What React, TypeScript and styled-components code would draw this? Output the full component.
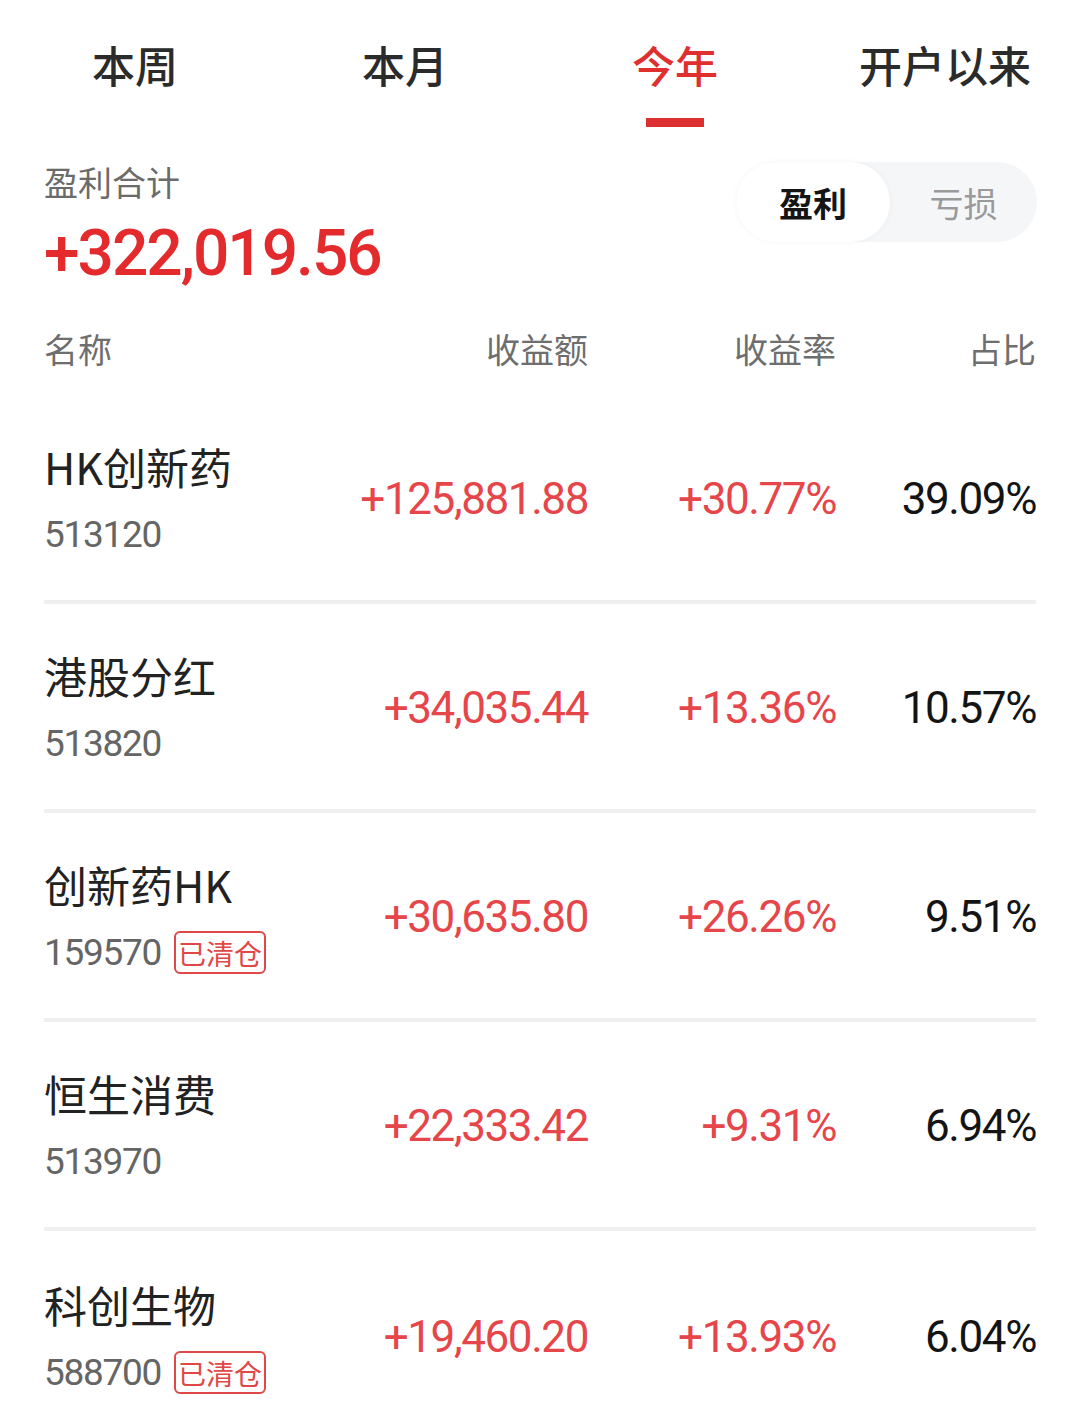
import React from "react";
import styled, { createGlobalStyle } from "styled-components";

const GlobalStyle = createGlobalStyle`
  html, body { margin: 0; padding: 0; background: #ffffff; }
  body { font-family: "Noto Sans CJK SC", "Noto Sans", sans-serif; }
  * { box-sizing: border-box; }
`;

const CJK = `"Noto Sans CJK SC", "Noto Sans", sans-serif`;
const NUM = `Roboto, "Noto Sans CJK SC", sans-serif`;

const Page = styled.div`
  width: 1080px;
  min-height: 1426px;
  background: #fff;
  overflow: hidden;
`;

const Tabs = styled.div`
  display: grid;
  grid-template-columns: repeat(4, 1fr);
  height: 127px;
`;

const Tab = styled.div`
  display: flex;
  flex-direction: column;
  align-items: center;
  padding-top: 41px;
`;

const TabLabel = styled.span<{ $active?: boolean }>`
  font-family: ${CJK};
  font-size: 43px;
  line-height: 46px;
  font-weight: 500;
  color: ${(p) => (p.$active ? "#df2f2f" : "#2b2b2b")};
`;

const Indicator = styled.div<{ $active?: boolean }>`
  margin-top: 31px;
  width: 58px;
  height: 9px;
  background: ${(p) => (p.$active ? "#dc2f2f" : "transparent")};
`;

const Content = styled.div`
  padding: 0 44px;
`;

const Summary = styled.div`
  display: flex;
  justify-content: space-between;
  align-items: flex-start;
  padding-top: 35px;
`;

const SummaryLeft = styled.div`
  display: flex;
  flex-direction: column;
`;

const SummaryLabel = styled.div`
  font-family: ${CJK};
  font-size: 34px;
  line-height: 40px;
  color: #6b6b6b;
`;

const Total = styled.div`
  margin-top: 17px;
  font-family: ${NUM};
  font-size: 64px;
  line-height: 70px;
  font-weight: 500;
  letter-spacing: -2px;
  color: #e32a2d;
`;

const Toggle = styled.div`
  display: flex;
  width: 301px;
  height: 80px;
  border-radius: 40px;
  background: #f5f6f8;
  margin-right: -1px;
`;

const ToggleItem = styled.div<{ $active?: boolean }>`
  flex: ${(p) => (p.$active ? "0 0 154px" : "1")};
  display: flex;
  align-items: center;
  justify-content: center;
  border-radius: 40px;
  font-family: ${CJK};
  font-size: 34px;
  font-weight: ${(p) => (p.$active ? 700 : 400)};
  color: ${(p) => (p.$active ? "#151515" : "#9a9a9a")};
  background: ${(p) => (p.$active ? "#ffffff" : "transparent")};
  box-shadow: ${(p) => (p.$active ? "0 0 6px rgba(0,0,0,0.04)" : "none")};
`;

const Grid = styled.div`
  display: grid;
  grid-template-columns: 1fr 248px 248px 200px;
  align-items: center;
`;

const Header = styled(Grid)`
  margin-top: 20px;
  height: 80px;
  margin-bottom: 6px;
`;

const HeadCell = styled.div<{ $align?: "left" | "right" }>`
  font-family: ${CJK};
  font-size: 34px;
  line-height: 40px;
  color: #6e6e6e;
  text-align: ${(p) => p.$align ?? "right"};
`;

const Row = styled(Grid)<{ $last?: boolean }>`
  height: 209px;
  border-bottom: ${(p) => (p.$last ? "none" : "4px solid #efefef")};
`;

const NameCell = styled.div`
  display: flex;
  flex-direction: column;
  gap: 18px;
`;

const Name = styled.div`
  font-family: ${CJK};
  font-size: 43px;
  line-height: 56px;
  color: #222;
`;

const CodeLine = styled.div`
  display: flex;
  align-items: center;
  height: 46px;
`;

const Code = styled.span`
  font-family: ${NUM};
  font-size: 37px;
  line-height: 46px;
  letter-spacing: -1.3px;
  color: #656565;
`;

const Badge = styled.span`
  margin-left: 13px;
  height: 43px;
  display: inline-flex;
  align-items: center;
  padding: 0 2px;
  border: 2px solid #e04848;
  border-radius: 6px;
  font-family: ${CJK};
  font-size: 28px;
  line-height: 1;
  color: #e04848;
`;

const Value = styled.div<{ $tone: "red" | "black" }>`
  font-family: ${NUM};
  font-size: 44px;
  line-height: 50px;
  letter-spacing: -1.4px;
  text-align: right;
  color: ${(p) => (p.$tone === "red" ? "#e6454a" : "#141414")};
  margin-top: 2px;
`;

type Item = {
  name: string;
  code: string;
  cleared?: boolean;
  amount: string;
  rate: string;
  share: string;
};

const items: Item[] = [
  { name: "HK创新药", code: "513120", amount: "+125,881.88", rate: "+30.77%", share: "39.09%" },
  { name: "港股分红", code: "513820", amount: "+34,035.44", rate: "+13.36%", share: "10.57%" },
  { name: "创新药HK", code: "159570", cleared: true, amount: "+30,635.80", rate: "+26.26%", share: "9.51%" },
  { name: "恒生消费", code: "513970", amount: "+22,333.42", rate: "+9.31%", share: "6.94%" },
  { name: "科创生物", code: "588700", cleared: true, amount: "+19,460.20", rate: "+13.93%", share: "6.04%" },
];

const tabs = ["本周", "本月", "今年", "开户以来"];

export default function App() {
  return (
    <Page>
      <GlobalStyle />
      <Tabs>
        {tabs.map((t) => (
          <Tab key={t}>
            <TabLabel $active={t === "今年"}>{t}</TabLabel>
            <Indicator $active={t === "今年"} />
          </Tab>
        ))}
      </Tabs>
      <Content>
        <Summary>
          <SummaryLeft>
            <SummaryLabel>盈利合计</SummaryLabel>
            <Total>+322,019.56</Total>
          </SummaryLeft>
          <Toggle>
            <ToggleItem $active>盈利</ToggleItem>
            <ToggleItem>亏损</ToggleItem>
          </Toggle>
        </Summary>
        <Header>
          <HeadCell $align="left">名称</HeadCell>
          <HeadCell>收益额</HeadCell>
          <HeadCell>收益率</HeadCell>
          <HeadCell>占比</HeadCell>
        </Header>
        {items.map((it, i) => (
          <Row key={it.code} $last={i === items.length - 1}>
            <NameCell>
              <Name>{it.name}</Name>
              <CodeLine>
                <Code>{it.code}</Code>
                {it.cleared && <Badge>已清仓</Badge>}
              </CodeLine>
            </NameCell>
            <Value $tone="red">{it.amount}</Value>
            <Value $tone="red">{it.rate}</Value>
            <Value $tone="black">{it.share}</Value>
          </Row>
        ))}
      </Content>
    </Page>
  );
}
